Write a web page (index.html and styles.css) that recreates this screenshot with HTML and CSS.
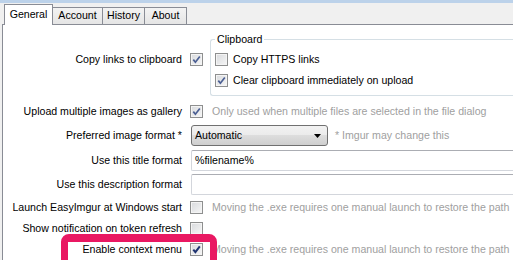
FILE: index.html
```html
<!DOCTYPE html>
<html lang="en">

<head>
    <meta charset="UTF-8">
    <title>EasyImgur settings</title>
    <link rel="stylesheet" href="styles.css">
</head>

<body>
    <div class="window">
        <div class="topbar"></div>
        <div class="tabs">
            <div class="tab active">General</div>
            <div class="tab tab-account">Account</div>
            <div class="tab tab-history">History</div>
            <div class="tab tab-about">About</div>
        </div>

        <div class="panel">
            <!-- clipboard -->
            <div class="row row-clip">
                <div class="lbl">Copy links to clipboard</div>
                <span class="cb"><svg viewBox="0 0 11 11"><path d="M2.3 5.6 L4.4 8.2 L8.8 2.4" /></svg></span>
                <fieldset class="group">
                    <legend>Clipboard</legend>
                    <div class="opt"><span class="cb"></span>Copy HTTPS links</div>
                    <div class="opt"><span class="cb"><svg viewBox="0 0 11 11"><path d="M2.3 5.6 L4.4 8.2 L8.8 2.4" /></svg></span>Clear clipboard immediately on upload</div>
                </fieldset>
            </div>

            <div class="row row-gallery">
                <div class="lbl">Upload multiple images as gallery</div>
                <span class="cb"><svg viewBox="0 0 11 11"><path d="M2.3 5.6 L4.4 8.2 L8.8 2.4" /></svg></span>
                <span class="hint">Only used when multiple files are selected in the file dialog</span>
            </div>

            <div class="row row-format">
                <div class="lbl">Preferred image format *</div>
                <div class="select">
                    <span>Automatic</span>
                    <svg class="arrow" viewBox="0 0 7 4"><path d="M0 0 H7 L3.5 4 Z" /></svg>
                </div>
                <span class="hint hint-format">* Imgur may change this</span>
            </div>

            <div class="row row-title">
                <div class="lbl">Use this title format</div>
                <div class="input">%filename%</div>
            </div>

            <div class="row row-desc">
                <div class="lbl">Use this description format</div>
                <div class="input"></div>
            </div>

            <div class="row row-small">
                <div class="lbl">Launch EasyImgur at Windows start</div>
                <span class="cb"></span>
                <span class="hint">Moving the .exe requires one manual launch to restore the path</span>
            </div>

            <div class="row row-small">
                <div class="lbl">Show notification on token refresh</div>
                <span class="cb"></span>
            </div>

            <div class="row row-small row-menu">
                <div class="lbl">Enable context menu</div>
                <span class="cb cb-dark"><svg viewBox="0 0 11 11"><path d="M2.3 5.6 L4.4 8.2 L8.8 2.4" /></svg></span>
                <span class="hint">Moving the .exe requires one manual launch to restore the path</span>
                <div class="marker"></div>
            </div>
        </div>
    </div>
</body>

</html>
```

FILE: styles.css
```css
* {
    padding: 0;
    margin: 0;
    box-sizing: border-box;
}

body {
    height: 260px;
    background: #f0f0f0;
    overflow: hidden;
    font-family: "Liberation Sans", Arial, sans-serif;
    font-size: 10.6px;
    line-height: 13px;
    color: #000;
}

.window {
    display: flex;
    flex-direction: column;
    height: 100%;
}

.topbar {
    height: 3px;
    background: #bcd2ea;
}

/* tabs */
.tabs {
    display: flex;
    align-items: flex-end;
    height: 21px;
    padding-left: 4px;
}

.tab {
    height: 17px;
    width: 50px;
    padding-top: 1px;
    text-align: center;
    border: 1px solid #898c95;
    border-bottom: none;
    border-left: none;
    background: linear-gradient(#f3f3f3, #e5e5e5);
}

.tab.active {
    position: relative;
    height: 21px;
    width: 49px;
    margin-bottom: -1px;
    padding-top: 3px;
    border-left: 1px solid #898c95;
    background: #fff;
}

.tab-history {
    width: 42px;
}

.tab-about {
    width: 42px;
}

/* panel */
.panel {
    flex: 1;
    margin-left: 2px;
    padding-top: 8px;
    background: #fff;
    border-top: 1px solid #898c95;
    border-left: 1px solid #898c95;
}

.row {
    display: flex;
    align-items: center;
}

.lbl {
    width: 187px;
    padding-right: 8px;
    text-align: right;
    white-space: nowrap;
}

.row-clip {
    align-items: flex-start;
    margin-bottom: 3px;
}

.row-clip .lbl,
.row-clip > .cb {
    margin-top: 20px;
}

.row-gallery {
    height: 24px;
}

.row-format {
    height: 25px;
}

.row-title {
    height: 24px;
}

.row-desc {
    height: 25px;
}

.row-small {
    height: 21px;
}

/* checkbox */
.cb {
    display: inline-block;
    flex: none;
    width: 13px;
    height: 13px;
    border: 1px solid #8e8f8f;
    background: linear-gradient(135deg, #d8dadd, #f6f6f6);
    box-shadow: inset 0 0 0 1px #f4f4f4;
}

.cb svg {
    display: block;
    width: 11px;
    height: 11px;
}

.cb path {
    fill: none;
    stroke: #4b5f93;
    stroke-width: 1.7;
}

.cb-dark path {
    stroke: #1f3370;
    stroke-width: 2;
}

/* groupbox, open to the right edge */
.group {
    flex: 1;
    min-width: 0;
    margin-left: 7px;
    padding: 3px 0 4px 4px;
    border: 1px solid #d5dfe5;
    border-right: none;
    border-radius: 3px 0 0 3px;
}

.group legend {
    padding: 0 2px;
}

.opt {
    display: flex;
    align-items: center;
    gap: 5px;
    height: 21px;
}

.hint {
    color: #a0a0a0;
    margin-left: 9px;
    white-space: nowrap;
}

.hint-format {
    margin-left: 7px;
}

/* combobox */
.select {
    display: flex;
    align-items: center;
    justify-content: space-between;
    width: 137px;
    height: 21px;
    margin-left: 1px;
    padding: 0 4px 0 3px;
    border: 1px solid #707070;
    border-radius: 3px;
    background: linear-gradient(#f2f2f2 0%, #ebebeb 50%, #dddddd 50%, #cfcfcf 100%);
}

.arrow {
    width: 7px;
    height: 4px;
    margin-right: 2px;
}

/* textbox */
.input {
    flex: 1;
    height: 21px;
    margin-left: 1px;
    padding: 3px 0 0 3px;
    border: 1px solid #d3d6dc;
    border-top-color: #abadb3;
    border-right: none;
    border-radius: 2px 0 0 2px;
    background: #fff;
}

/* annotation */
.row-menu {
    position: relative;
}

.marker {
    position: absolute;
    left: 58px;
    top: -5px;
    width: 156px;
    height: 34px;
    border: 7px solid #e91862;
    border-top-width: 8px;
    border-radius: 8px;
}
```
